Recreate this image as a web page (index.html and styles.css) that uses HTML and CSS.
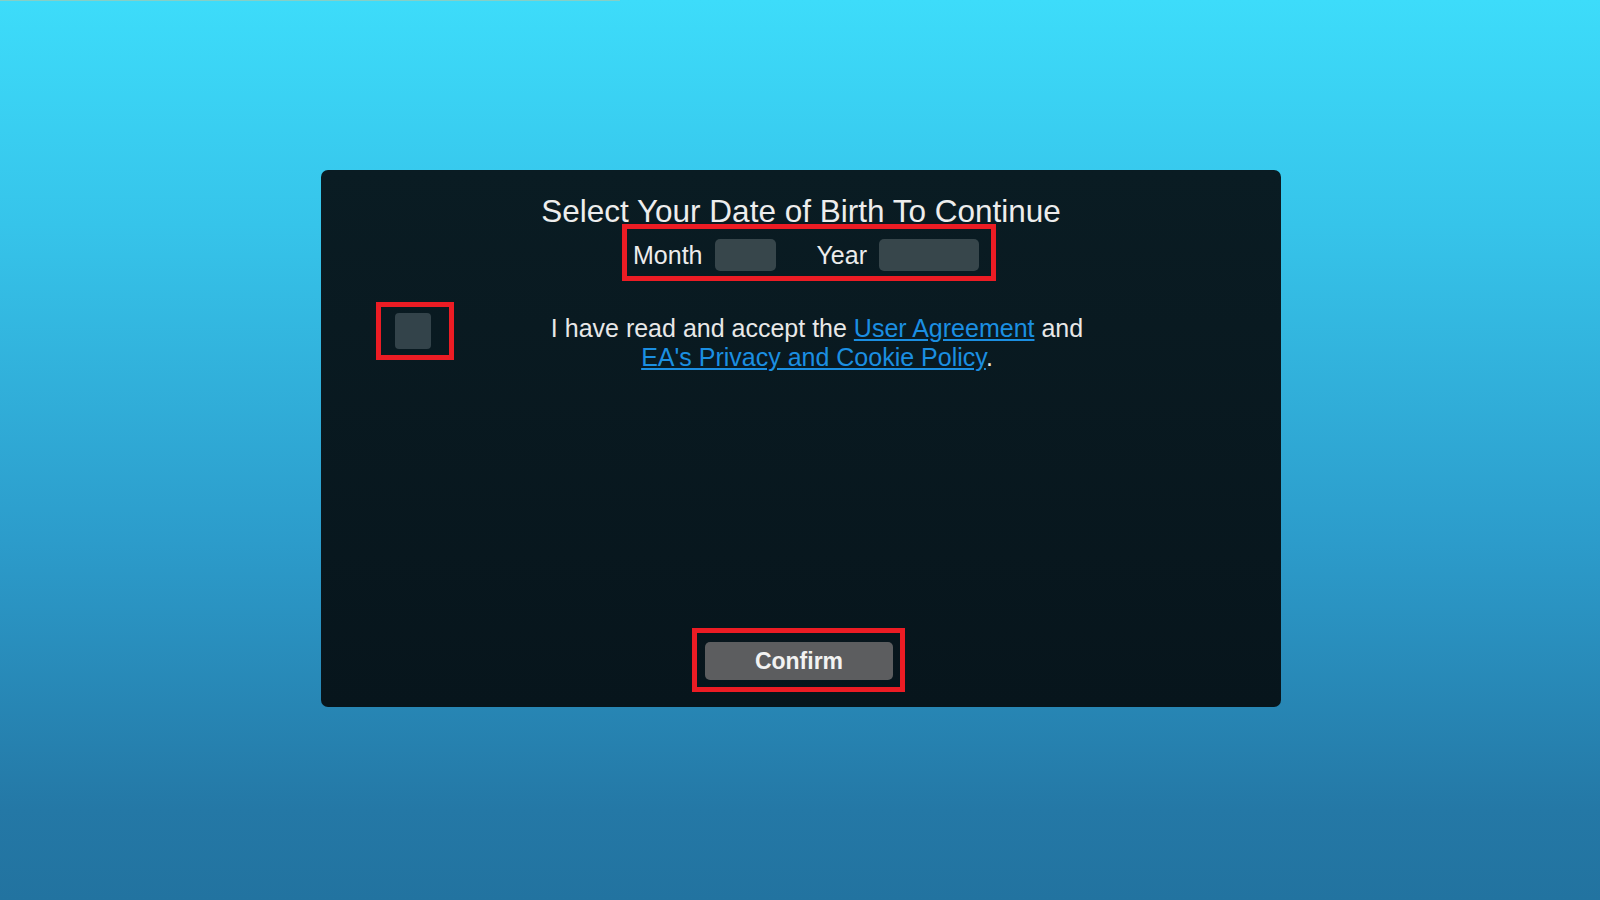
FILE: index.html
```html
<!DOCTYPE html>
<html lang="en">
<head>
<meta charset="utf-8">
<title>Select Your Date of Birth</title>
<link rel="stylesheet" href="styles.css">
</head>
<body>
<div class="topline"></div>
<main class="panel">
  <h1 class="title">Select Your Date of Birth To Continue</h1>
  <div class="dob mark">
    <span class="label">Month</span>
    <span class="select month"></span>
    <span class="label">Year</span>
    <span class="select year"></span>
  </div>
  <div class="agree">
    <div class="checkwrap mark"><span class="checkbox"></span></div>
    <p class="agree-text">I have read and accept the <a href="#">User Agreement</a> and<br><a href="#">EA's Privacy and Cookie Policy</a>.</p>
  </div>
  <div class="confirmwrap mark"><button class="confirm">Confirm</button></div>
</main>
</body>
</html>
```
FILE: styles.css
```css
html, body {
  margin: 0;
  padding: 0;
}
body {
  width: 1600px;
  height: 900px;
  overflow: hidden;
  background: linear-gradient(to bottom, #3ddcfa 0%, #36c4ea 25%, #2c9ccb 60%, #2478a6 90%, #2273a0 100%);
  font-family: "Liberation Sans", Arial, sans-serif;
  color: #ececec;
}
.topline {
  width: 620px;
  height: 1px;
  background: #86cfc6;
}
.panel {
  box-sizing: border-box;
  width: 960px;
  height: 537px;
  margin: 169px 0 0 321px;
  padding: 27px 0 15px;
  background: linear-gradient(to bottom, #0a1c23, #07151c);
  border-radius: 7px;
  display: flex;
  flex-direction: column;
}
.title {
  margin: 0;
  font-size: 31.5px;
  font-weight: normal;
  line-height: 28px;
  text-align: center;
  color: #ededed;
}
.mark {
  border: 5px solid #ec1c24;
}
.dob {
  align-self: flex-start;
  margin: -1px 0 0 301px;
  padding: 10px 12px 5px 6px;
  display: flex;
  align-items: center;
}
.label {
  font-size: 25px;
  line-height: 32px;
  color: #ececec;
}
.select {
  display: block;
  height: 32px;
  border-radius: 5px;
  background: #37464b;
}
.month {
  width: 61px;
  margin: 0 40px 0 13px;
}
.year {
  width: 100px;
  margin-left: 12px;
}
.agree {
  display: flex;
  align-items: flex-start;
  margin-top: 21px;
}
.checkwrap {
  margin-left: 55px;
  padding: 6px 18px 6px 14px;
}
.checkbox {
  display: block;
  width: 36px;
  height: 36px;
  border-radius: 4px;
  background: #33434a;
}
.agree-text {
  flex: 1;
  margin: 12px 101px 0 0;
  font-size: 25px;
  line-height: 29px;
  text-align: center;
  color: #e8e8e8;
}
.agree-text a {
  color: #1b8fe2;
  text-decoration: underline;
}
.confirmwrap {
  margin: auto 0 0 371px;
  align-self: flex-start;
  padding: 9px 7px 7px 8px;
}
.confirm {
  display: block;
  width: 188px;
  height: 38px;
  border: 0;
  border-radius: 5px;
  background: #5c5d5f;
  color: #f2f2f2;
  font-family: "Liberation Sans", Arial, sans-serif;
  font-size: 23px;
  font-weight: bold;
  line-height: 38px;
  padding: 0;
}
```
